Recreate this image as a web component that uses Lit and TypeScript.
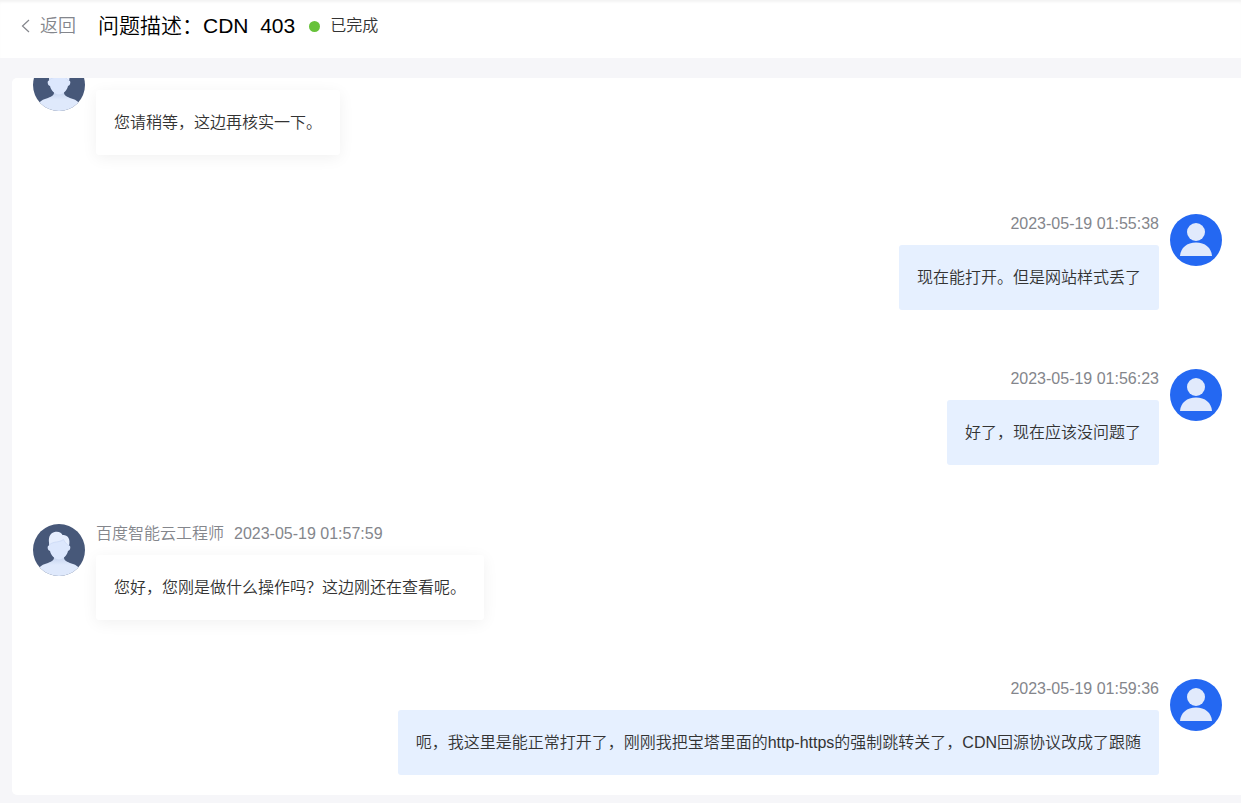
import { LitElement, html, css, svg, nothing } from "lit";
import { customElement, property } from "lit/decorators.js";

interface Message {
  from: "agent" | "user";
  name?: string;
  time?: string;
  text: string;
}

const MESSAGES: Message[] = [
  { from: "agent", text: "您请稍等，这边再核实一下。" },
  { from: "user", time: "2023-05-19 01:55:38", text: "现在能打开。但是网站样式丢了" },
  { from: "user", time: "2023-05-19 01:56:23", text: "好了，现在应该没问题了" },
  {
    from: "agent",
    name: "百度智能云工程师",
    time: "2023-05-19 01:57:59",
    text: "您好，您刚是做什么操作吗？这边刚还在查看呢。",
  },
  {
    from: "user",
    time: "2023-05-19 01:59:36",
    text: "呃，我这里是能正常打开了，刚刚我把宝塔里面的http-https的强制跳转关了，CDN回源协议改成了跟随",
  },
];

const userArt = svg`
  <circle cx="26" cy="26" r="26" fill="#2468f2"></circle>
  <circle cx="26" cy="18" r="9" fill="#e1eafc"></circle>
  <path d="M10 42C10.600 33.800 17 28.500 26 28.500S41.400 33.800 42 42Z" fill="#e1eafc"></path>`;

const agentArt = svg`
  <defs>
    <clipPath id="disc"><circle cx="26" cy="26" r="26"></circle></clipPath>
    <linearGradient id="neck" x1="0" y1="0" x2="0" y2="1">
      <stop offset="0.150" stop-color="#c6d4ef"></stop>
      <stop offset="0.500" stop-color="#dfe9fc"></stop>
    </linearGradient>
  </defs>
  <g clip-path="url(#disc)">
    <rect width="52" height="52" fill="#475879"></rect>
    <path d="M21 30V34C20.500 37.500 16 38.500 12 40C9 41 7 42.500 5 45V52H47V45C45 42.500 43 41 40 40C36 38.500 31.500 37.500 31 34V30Z" fill="url(#neck)"></path>
    <path d="M16 21.500C14 21.500 14.200 26.500 17 27C18 31.500 22 35.500 26 35.500S34 31.500 35 27C37.800 26.500 38 21.500 36 21.500L35 14H17Z" fill="#dce7fd"></path>
    <path d="M16.500 21C15 15 16 9.500 21.500 8C26 7 28.500 9 29.500 11C34 10.500 38 14 36 22C33.500 20 31.500 18 30.500 15.500C26 19 19.500 17 16.500 21Z" fill="#e6eefe"></path>
    <path d="M16.500 21C19.500 17 26 19 30.500 15.500C31.500 18 33.500 20 36 22" fill="none" stroke="#c8d7f3" stroke-width="0.700"></path>
  </g>`;

@customElement("chat-message")
export class ChatMessage extends LitElement {
  @property({ attribute: false }) message!: Message;

  static styles = css`
    :host {
      display: block;
    }
    .row {
      display: flex;
      align-items: flex-start;
      gap: 11px;
    }
    .user {
      flex-direction: row-reverse;
    }
    .avatar {
      flex: none;
      width: 52px;
      height: 52px;
    }
    .body {
      display: flex;
      flex-direction: column;
      align-items: flex-start;
      min-width: 0;
    }
    .user .body {
      align-items: flex-end;
    }
    .meta {
      display: flex;
      gap: 10px;
      min-height: 20px;
      margin-bottom: 11px;
      line-height: 20px;
      color: #84868c;
    }
    .bubble {
      margin: 0;
      padding: 20px 18px;
      line-height: 25px;
      border-radius: 3px;
      color: #333;
      background: #fff;
      box-shadow: 0 3px 16px rgba(0, 0, 0, 0.06);
    }
    .user .bubble {
      background: #e6f0ff;
      box-shadow: none;
    }
  `;

  render() {
    const m = this.message;
    return html`
      <article class="row ${m.from}">
        <svg class="avatar" viewBox="0 0 52 52" aria-hidden="true">
          ${m.from === "user" ? userArt : agentArt}
        </svg>
        <div class="body">
          <div class="meta">
            ${m.name ? html`<span>${m.name}</span>` : nothing}
            ${m.time ? html`<time>${m.time}</time>` : nothing}
          </div>
          <p class="bubble">${m.text}</p>
        </div>
      </article>
    `;
  }
}

@customElement("app-root")
export class AppRoot extends LitElement {
  static styles = css`
    :host {
      display: flex;
      flex-direction: column;
      box-sizing: border-box;
      height: 100vh;
      background: #f6f6f9;
      font-family: "Liberation Sans", "Noto Sans CJK SC", sans-serif;
      font-size: 16px;
      font-weight: 350;
      color: #333;
    }
    .header {
      display: flex;
      align-items: center;
      flex: none;
      padding: 10px 20px 16px;
      line-height: 32px;
      background: #fff;
      box-shadow: inset 0 3px 3px -1px rgba(0, 0, 0, 0.05);
    }
    .back {
      display: flex;
      align-items: center;
      gap: 8px;
      margin-right: 22px;
      padding: 0;
      border: 0;
      background: none;
      font: inherit;
      font-size: 18px;
      line-height: 32px;
      color: #84868c;
      cursor: pointer;
    }
    .chevron {
      width: 12px;
      height: 16px;
    }
    .title {
      margin: 0 14px 0 0;
      font-size: 21px;
      font-weight: 350;
      color: #000;
      white-space: pre;
    }
    .status {
      display: flex;
      align-items: center;
      gap: 10px;
    }
    .dot {
      width: 11px;
      height: 11px;
      border-radius: 50%;
      background: #67c23a;
    }
    .panel {
      display: flex;
      flex-direction: column;
      justify-content: flex-end;
      flex: 1;
      min-height: 0;
      margin: 20px 0 8px 12px;
      overflow: hidden;
      border-radius: 5px 0 0 5px;
      background: #fff;
    }
    .messages {
      display: flex;
      flex-direction: column;
      gap: 59px;
      margin: 0;
      padding: 0 19px 20px 21px;
      list-style: none;
    }
  `;

  render() {
    return html`
      <header class="header">
        <button class="back" type="button">
          <svg class="chevron" viewBox="0 0 12 16" aria-hidden="true">
            <path d="M9 2L2.500 8L9 14" fill="none" stroke="#84868c" stroke-width="1.200"></path>
          </svg>
          <span>返回</span>
        </button>
        <h1 class="title">问题描述：CDN  403</h1>
        <div class="status"><span class="dot"></span><span>已完成</span></div>
      </header>
      <main class="panel">
        <ul class="messages">
          ${MESSAGES.map((m) => html`<li><chat-message .message=${m}></chat-message></li>`)}
        </ul>
      </main>
    `;
  }
}
